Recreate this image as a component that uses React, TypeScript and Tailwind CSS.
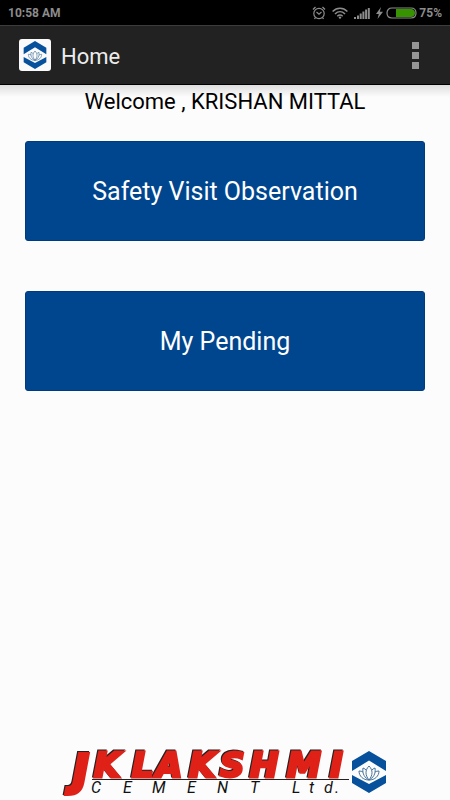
import type { SVGProps } from 'react'

const FONT = 'font-[Roboto,"Liberation_Sans",sans-serif]'

const actions = ['Safety Visit Observation', 'My Pending']

function LotusMark(props: SVGProps<SVGSVGElement>) {
  return (
    <svg viewBox="0 0 34 42" fill="none" aria-hidden="true" {...props}>
      <path d="M17 0 34 10v10L17 9.500 0 20V10z" fill="#07519c" />
      <path d="M17 42 34 32V24L17 33 0 24v8z" fill="#07519c" />
      <g stroke="#48749b" strokeWidth="1" strokeLinejoin="round">
        <path d="M17 29C11 29 7 25 7 20c1.500 0 3 .3 4 1M17 29c6 0 10-4 10-9-1.500 0-3 .3-4 1" />
        <path d="M17 29c-4-2-7-6-6-12 1.500.5 2.500 1.300 3.200 2.200M17 29c4-2 7-6 6-12-1.500.5-2.500 1.300-3.200 2.200" />
        <path d="M17 29c-4-5-4-10 0-14 4 4 4 9 0 14z" />
      </g>
    </svg>
  )
}

function AlarmIcon() {
  return (
    <svg viewBox="0 0 14 14" className="h-3.5 w-3.5" fill="none" stroke="currentColor" aria-hidden="true">
      <circle cx="7" cy="7.500" r="5.200" strokeWidth="1.200" />
      <path d="M1 3.500 3.500 1M13 3.500 10.500 1M3.500 11.500 2.500 13M10.500 11.500l1 1.500" strokeWidth="1.300" />
      <path d="M4.500 6 7 8.300 9.500 6" strokeWidth="1.200" />
    </svg>
  )
}

function WifiIcon() {
  return (
    <svg viewBox="0 0 16 12" className="h-3 w-4" fill="none" stroke="currentColor" aria-hidden="true">
      <path d="M.6 4.500C5 .2 11 .2 15.400 4.500M3 7c3-3 7-3 10 0M5.300 9.200c1.700-1.500 3.700-1.500 5.400 0" strokeWidth="1.500" />
      <circle cx="8" cy="10.600" r="1.200" fill="currentColor" stroke="none" />
    </svg>
  )
}

function SignalIcon() {
  return (
    <svg viewBox="0 0 16 12" className="h-3 w-4" fill="currentColor" aria-hidden="true">
      <path d="M0 10h2v2H0zM3 8.500h2V12H3zM5.700 6.500h2V12h-2zM8.400 4.500h2V12h-2zM11.100 2.500h2V12h-2zM13.800 1h2v11h-2z" />
    </svg>
  )
}

function BatteryIcon() {
  return (
    <svg viewBox="0 0 41 12" className="h-3 w-[41px]" aria-hidden="true">
      <path d="M5 0 0 7h2.800L1.500 12 7 4.800H3.800z" fill="currentColor" />
      <path d="M20 2h15c2.500 0 4 1.700 4 4s-1.500 4-4 4H20z" fill="#389300" />
      <path d="M16 1h19c3 0 5 2 5 5s-2 5-5 5H16c-3 0-5-2-5-5s2-5 5-5z" fill="none" stroke="#8c8c8c" strokeWidth="1.200" />
    </svg>
  )
}

function CompanyLogo() {
  return (
    <svg viewBox="0 0 322 48" className="h-12 w-[322px] overflow-visible" role="img" aria-label="JK Lakshmi Cement Ltd.">
      <text
        x="9 30 52 68 92 125 156 186 223 266"
        y="37 29"
        fontSize="34"
        fill="#df2118"
        stroke="#df2118"
        strokeWidth="3"
        className="font-['DejaVu_Sans',sans-serif] font-bold italic drop-shadow-[-1px_-1px_0_#222]"
      >
        <tspan fontSize="42" strokeWidth="4">J</tspan>K LAKSHMI
      </text>
      <path d="M28 31.500h257" stroke="#222" strokeWidth="1" />
      <text
        x="27 59 88 123 153 186 200 228 245 260 271"
        y="45"
        fontSize="16"
        className={`${FONT} italic`}
        fill="#111"
      >
        CEMENT Ltd.
      </text>
      <LotusMark x="288" y="3" width="34" height="42" />
    </svg>
  )
}

export default function App() {
  return (
    <div className={`${FONT} flex min-h-screen flex-col bg-[#fcfcfc]`}>
      <div className="flex h-[25px] items-center justify-between bg-black px-2 text-[12px] font-bold text-[#8c8c8c]">
        <span>10:58 AM</span>
        <div className="flex items-center gap-1.5">
          <AlarmIcon />
          <WifiIcon />
          <SignalIcon />
          <BatteryIcon />
          <span className="-ml-1">75%</span>
        </div>
      </div>

      <header className="flex h-[60px] items-center gap-2.5 border-t border-b border-t-[#3c3c3c] border-b-black bg-[#222] pr-[25px] pl-[19px]">
        <div className="flex h-8 w-8 items-center justify-center rounded-[3px] bg-[#fafafa]">
          <LotusMark className="h-7 w-6" />
        </div>
        <h1 className="flex-1 pt-0.5 text-[22px] text-[#ececec]">Home</h1>
        <button type="button" aria-label="More options" className="flex w-5 flex-col items-center gap-[3px]">
          <span className="h-[7px] w-[7px] bg-[#969696]" />
          <span className="h-[7px] w-[7px] bg-[#969696]" />
          <span className="h-[7px] w-[7px] bg-[#969696]" />
        </button>
      </header>

      <main className="flex flex-1 flex-col bg-linear-to-b from-[#dedede] to-[#fcfcfc] to-[12px] px-[25px]">
        <p className="text-center text-[22px] leading-[34px] text-black">Welcome , KRISHAN MITTAL</p>
        <div className="mt-[22px] flex flex-col gap-[50px]">
          {actions.map((label) => (
            <button
              key={label}
              type="button"
              className="h-[100px] rounded-[3px] border border-[#003a80] bg-[#00468e] pt-0.5 text-[25px] text-white"
            >
              {label}
            </button>
          ))}
        </div>
      </main>

      <footer className="flex justify-center pb-1">
        <CompanyLogo />
      </footer>
    </div>
  )
}
